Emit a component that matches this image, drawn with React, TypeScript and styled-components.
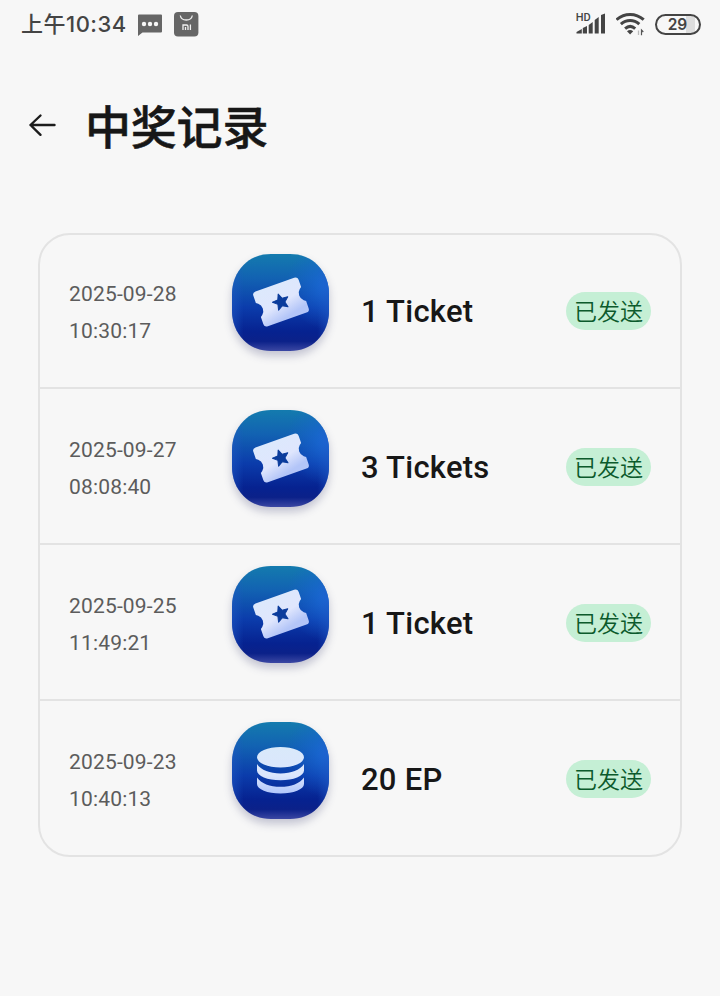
import React from "react";
import styled, { createGlobalStyle } from "styled-components";

const GlobalStyle = createGlobalStyle`
  * { box-sizing: border-box; }
  body { margin: 0; background: #f7f7f7; }
`;

const Screen = styled.main`
  min-height: 996px;
  background: #f7f7f7;
  color: #171717;
  font-family: Roboto, "Noto Sans CJK SC", sans-serif;
  overflow: hidden;
`;

const StatusBar = styled.div`
  display: flex;
  align-items: center;
  justify-content: space-between;
  height: 48px;
  padding: 0 19px 0 21px;
  color: #444;
`;

const StatusGroup = styled.div<{ $gap: number }>`
  display: flex;
  align-items: center;
  gap: ${(p) => p.$gap}px;
`;

const Clock = styled.span`
  width: 106px;
  height: 48px;
  font-family: Inter, "Noto Sans CJK SC", sans-serif;
  font-size: 22px;
  font-weight: 500;
  line-height: 49px;
  letter-spacing: 0.5px;
  white-space: nowrap;
`;

const Header = styled.header`
  display: flex;
  align-items: center;
  height: 104px;
  margin-top: 23px;
  padding-left: 28px;
`;

const BackButton = styled.button`
  display: flex;
  width: 28px;
  height: 24px;
  margin: 4px 29px 0 0;
  padding: 0;
  border: 0;
  background: none;
  color: #1c1c1c;
`;

const Title = styled.h1`
  margin: 0;
  padding-top: 1px;
  font-family: "Noto Sans CJK SC", sans-serif;
  font-size: 46px;
  font-weight: 500;
  line-height: 60px;
  letter-spacing: -0.2px;
  -webkit-text-stroke: 0.5px #171717;
`;

const Records = styled.ul`
  width: 644px;
  height: 624px;
  margin: 58px 0 0 38px;
  padding: 0;
  border: 2px solid #e3e3e3;
  border-radius: 32px;
  list-style: none;
`;

const Record = styled.li`
  display: grid;
  grid-template-columns: 162px 130px 1fr auto;
  align-items: start;
  height: 156px;
  padding: 21px 29px 0;
  border-bottom: 2px solid #e3e3e3;
  &:first-child { margin-top: -2px; }
  &:last-child { border-bottom: 0; height: 154px; }
`;

const Time = styled.time`
  padding-top: 22px;
  color: #5c5c5c;
  font-size: 21px;
  line-height: 37px;
  letter-spacing: 0.17px;
`;

const Prize = styled.span`
  padding-top: 38px;
  font-size: 31px;
  font-weight: 500;
  line-height: 40px;
  letter-spacing: 0.25px;
  white-space: nowrap;
`;

const Badge = styled.span`
  display: flex;
  align-items: center;
  justify-content: center;
  width: 85px;
  height: 38px;
  margin-top: 38px;
  border-radius: 19px;
  background: #c5efd5;
  color: #0c5a2c;
  font-family: "Noto Sans CJK SC", sans-serif;
  font-size: 23px;
  font-weight: 350;
  line-height: 36px;
  padding-bottom: 2px;
`;

const Tile = styled.svg`
  display: block;
  margin-left: 1px;
  overflow: visible;
  filter: drop-shadow(0 5px 4px rgba(30, 35, 90, 0.24));
`;

const tileShape =
  "M39 0H58C69 0 78 3.5 85.5 11S97 29 97 40V57C97 68 93 78.500 85.500 86S69 97 58 97H39C28 97 19 93.500 11.500 86S0 68 0 57V40C0 29 4 18.500 11.500 11S28 0 39 0Z";

type Kind = "ticket" | "coins";

function Ticket({ id }: { id: string }) {
  return (
    <g transform="translate(49 48) rotate(-19.5)">
      <path
        fill={`url(#${id}-face)`}
        d="M-20.500-18.500H20.500Q24-18.500 24-15V-7.500L22-6Q19.300-3.800 19.300 0T22 6L24 7.500V15Q24 18.500 20.500 18.500H-20.500Q-24 18.500-24 15V7.500L-22 6Q-19.300 3.800-19.300 0T-22-6L-24-7.500V-15Q-24-18.500-20.500-18.500Z"
      />
      <path
        fill="#0b3c9c"
        stroke="#0b3c9c"
        strokeWidth="1"
        strokeLinejoin="round"
        d="M0-8.5L2.3-3.1L8.1-2.6L3.7 1.2L5 6.9L0 3.9L-5 6.9L-3.7 1.2L-8.1-2.6L-2.3-3.1Z"
      />
    </g>
  );
}

function Coins({ id }: { id: string }) {
  return (
    <g fill={`url(#${id}-stack)`}>
      <path d="M25 35.3a23.5 10.3 0 0 1 47 0a23.5 10.3 0 0 1-47 0Z" />
      <path d="M25 42C29 48 38 51.500 48.5 51.500S68 48 72 42V48.5C72 54 61.5 58.3 48.5 58.3S25 54 25 48.5Z" />
      <path d="M25 55.5C29 61.500 38 64.800 48.5 64.800S68 61.500 72 55.5V62C72 67.3 61.5 71.5 48.5 71.5S25 67.3 25 62Z" />
    </g>
  );
}

function PrizeIcon({ kind, id }: { kind: Kind; id: string }) {
  return (
    <Tile width="97" height="97" viewBox="0 0 97 97">
      <defs>
        <linearGradient id={`${id}-base`} x1="0" y1="0" x2="0" y2="1">
          <stop offset="0" stopColor="#147bae" />
          <stop offset=".25" stopColor="#1262b2" />
          <stop offset=".55" stopColor="#0b3cab" />
          <stop offset=".8" stopColor="#062290" />
          <stop offset=".9" stopColor="#0b2189" />
          <stop offset="1" stopColor="#3b47a3" />
        </linearGradient>
        <radialGradient id={`${id}-glow`} cx="1" cy=".33" r=".45">
          <stop offset="0" stopColor="#1d6ee0" stopOpacity=".85" />
          <stop offset="1" stopColor="#1760d0" stopOpacity="0" />
        </radialGradient>
        <linearGradient id={`${id}-edge`} x1="0" y1="0" x2="1" y2="0">
          <stop offset="0" stopColor="#2058c4" stopOpacity=".5" />
          <stop offset=".12" stopColor="#2058c4" stopOpacity="0" />
          <stop offset=".88" stopColor="#2058c4" stopOpacity="0" />
          <stop offset="1" stopColor="#2058c4" stopOpacity=".5" />
        </linearGradient>
        <linearGradient id={`${id}-face`} x1="0" y1="0" x2=".3" y2="1">
          <stop offset="0" stopColor="#dce9fc" />
          <stop offset=".62" stopColor="#dfe6fd" />
          <stop offset="1" stopColor="#b3c5f8" />
        </linearGradient>
        <linearGradient id={`${id}-stack`} gradientUnits="userSpaceOnUse" x1="0" y1="25" x2="0" y2="72">
          <stop offset="0" stopColor="#d9e9fa" />
          <stop offset=".6" stopColor="#dbe6fd" />
          <stop offset="1" stopColor="#afc5fb" />
        </linearGradient>
      </defs>
      <path d={tileShape} fill={`url(#${id}-base)`} />
      <path d={tileShape} fill={`url(#${id}-glow)`} />
      <path d={tileShape} fill={`url(#${id}-edge)`} />
      {kind === "ticket" ? <Ticket id={id} /> : <Coins id={id} />}
    </Tile>
  );
}

const MessageIcon = () => (
  <svg width="25" height="24" viewBox="0 0 25 24">
    <path d="M1 2.5H23Q24 2.5 24 3.500V19.5Q24 20.5 23 20.5H4.500L0 24V3.5Q0 2.5 1 2.5Z" fill="#666" />
    <g fill="#f7f7f7">
      <circle cx="6" cy="12" r="2.2" />
      <circle cx="12" cy="12" r="2.2" />
      <circle cx="18" cy="12" r="2.2" />
    </g>
  </svg>
);

const StoreIcon = () => (
  <svg width="25" height="25" viewBox="0 0 25 25">
    <rect x="0" y="0" width="24.4" height="24.4" rx="4" fill="#666" />
    <g fill="none" stroke="#f1f1f1" strokeWidth="1.3">
      <path d="M6.3 3.5C7.3 9.5 17.3 9.5 18.3 3.5" />
      <path d="M9 18V13H12.5Q14 13 14 14.5V18M11.5 15V18M16.4 12.4V18" />
    </g>
  </svg>
);

const SignalIcon = () => (
  <svg width="31" height="26" viewBox="0 0 31 26" fill="#444">
    <text x="-.3" y="9.7" fontFamily="Roboto, sans-serif" fontSize="11" fontWeight="500">HD</text>
    <path d="M.5 22.500V21L5.800 18V22.500ZM6.800 17L11 15V22.500H6.800ZM12.700 14L16.700 11V22.500H12.700ZM18.700 9L22.700 6V22.500H18.700ZM25 4L29 2.500V22.500H25Z" />
  </svg>
);

const WifiIcon = () => (
  <svg width="30" height="26" viewBox="0 0 30 26">
    <g fill="none" stroke="#444" strokeWidth="3">
      <path d="M.5 8.7C8.500 1.7 19.700 1.7 27.700 8.7" />
      <path d="M4.900 13.2C10.300 8.3 17.900 8.3 23.300 13.2" />
      <path d="M9.100 17.6C12.300 14.8 16 14.8 19.200 17.6" />
    </g>
    <path d="M11 20.3Q14.100 17.8 17.200 20.3L14.100 23.5Z" fill="#444" />
    <path d="M22.500 24V19.5" stroke="#bbb" strokeWidth="1.3" />
    <path d="M25.500 24.3V19L27.300 21" fill="none" stroke="#555" strokeWidth="1.2" />
  </svg>
);

const Battery = styled.span`
  display: flex;
  align-items: center;
  justify-content: center;
  width: 46px;
  height: 21px;
  padding-right: 1px;
  border: 2px solid #444;
  border-radius: 11px;
  background: linear-gradient(90deg, transparent 29px, #ddd 29px, #ddd 38px, transparent 38px);
  font-family: Inter, sans-serif;
  font-size: 15.5px;
  font-weight: 600;
  line-height: 17px;
`;

const records: { date: string; time: string; prize: string; kind: Kind }[] = [
  { date: "2025-09-28", time: "10:30:17", prize: "1 Ticket", kind: "ticket" },
  { date: "2025-09-27", time: "08:08:40", prize: "3 Tickets", kind: "ticket" },
  { date: "2025-09-25", time: "11:49:21", prize: "1 Ticket", kind: "ticket" },
  { date: "2025-09-23", time: "10:40:13", prize: "20 EP", kind: "coins" },
];

export default function App() {
  return (
    <Screen>
      <GlobalStyle />
      <StatusBar>
        <StatusGroup $gap={11}>
          <Clock>上午10:34</Clock>
          <MessageIcon />
          <StoreIcon />
        </StatusGroup>
        <StatusGroup $gap={9}>
          <SignalIcon />
          <WifiIcon />
          <Battery>29</Battery>
        </StatusGroup>
      </StatusBar>
      <Header>
        <BackButton aria-label="返回">
          <svg width="28" height="24" viewBox="0 0 28 24" fill="none" stroke="currentColor" strokeWidth="2.4" strokeLinecap="round" strokeLinejoin="round">
            <path d="M26.5 12H2.5M12.5 2.500L2.5 12L12.5 21.800" />
          </svg>
        </BackButton>
        <Title>中奖记录</Title>
      </Header>
      <Records>
        {records.map((r, i) => (
          <Record key={r.date}>
            <Time>
              {r.date}
              <br />
              {r.time}
            </Time>
            <PrizeIcon kind={r.kind} id={`prize-${i}`} />
            <Prize>{r.prize}</Prize>
            <Badge>已发送</Badge>
          </Record>
        ))}
      </Records>
    </Screen>
  );
}
